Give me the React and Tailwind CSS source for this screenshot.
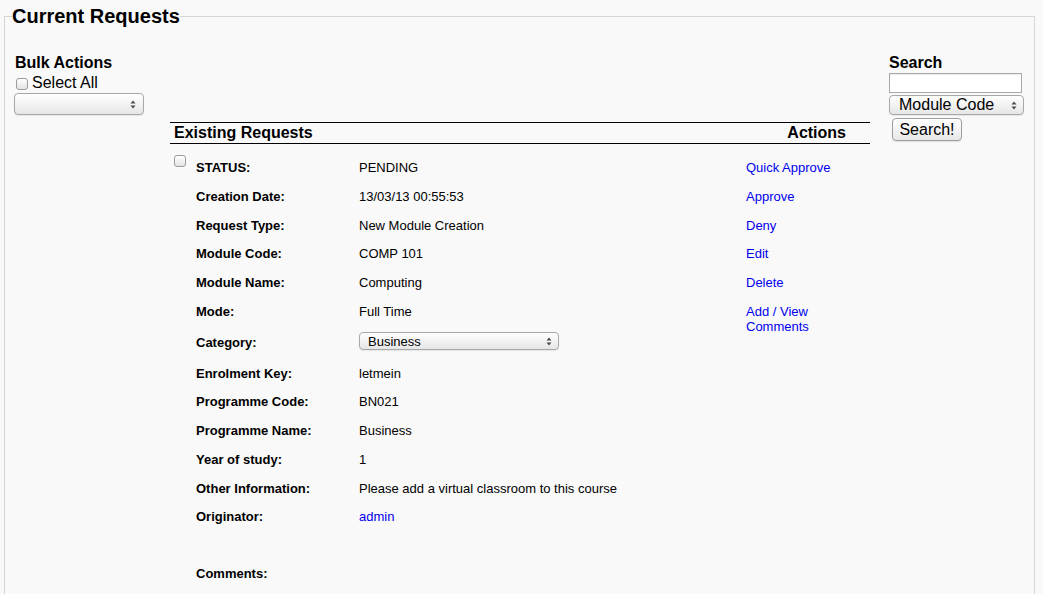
import React from 'react'

const rows = [
  { label: 'STATUS:', value: 'PENDING', action: 'Quick Approve' },
  { label: 'Creation Date:', value: '13/03/13 00:55:53', action: 'Approve' },
  { label: 'Request Type:', value: 'New Module Creation', action: 'Deny' },
  { label: 'Module Code:', value: 'COMP 101', action: 'Edit' },
  { label: 'Module Name:', value: 'Computing', action: 'Delete' },
  { label: 'Mode:', value: 'Full Time', action: 'Add / View Comments' },
]

const rowsAfter = [
  { label: 'Enrolment Key:', value: 'letmein' },
  { label: 'Programme Code:', value: 'BN021' },
  { label: 'Programme Name:', value: 'Business' },
  { label: 'Year of study:', value: '1' },
  { label: 'Other Information:', value: 'Please add a virtual classroom to this course' },
  { label: 'Originator:', value: 'admin', link: true },
]

function Check({ className = '' }) {
  return (
    <span className={`block w-[12px] h-[12px] rounded-[3px] border border-[#9c9c9c] bg-linear-to-b from-white to-[#e4e4e4] shadow-[0_1px_0_rgba(255,255,255,0.8)] ${className}`} />
  )
}

function Arrows() {
  return (
    <svg width="6" height="9" viewBox="0 0 6 9">
      <path d="M3 0.5L5.5 3.5H0.5Z M3 8.5L0.5 5.5H5.5Z" fill="#4a4a4a" />
    </svg>
  )
}

function FakeSelect({ text, className = '', textClass = '' }) {
  return (
    <div className={`flex items-center justify-between rounded-[4px] border border-[#a8a8a8] bg-linear-to-b from-white to-[#e6e6e6] shadow-[0_1px_1px_rgba(0,0,0,0.08)] ${className}`}>
      <span className={textClass}>{text}</span>
      <Arrows />
    </div>
  )
}

function Row({ label, value, action, link, height = 'h-[28.75px]' }) {
  return (
    <div className={`flex items-start ${height}`}>
      <div className="w-[26px] shrink-0" />
      <div className="w-[163px] shrink-0 pt-[7px] font-bold leading-[15px]">{label}</div>
      <div className={`w-[387px] shrink-0 pt-[7px] leading-[15px] ${link ? 'text-[#0000ee]' : ''}`}>{value}</div>
      {action && (
        <div className="w-[96px] pt-[7px] leading-[15px] text-[#0000ee]">{action}</div>
      )}
    </div>
  )
}

export default function App() {
  return (
    <div className="h-[594px] overflow-hidden bg-[#f9f9f9] font-['Liberation_Sans',Arial,sans-serif] text-black">
      <fieldset className="ml-[4px] mt-[5px] w-[1031px] border border-[#d6d6d6] px-[7px] pb-[60px]">
        <legend className="text-[20px] font-bold leading-[23px]">Current Requests</legend>

        <div className="flex items-start">
          {/* Bulk actions */}
          <div className="ml-[2px] mt-[26px] w-[131px] shrink-0">
            <div className="pl-[1px] text-[16px] font-bold leading-[18px]">Bulk Actions</div>
            <div className="flex items-start h-[18px]">
              <Check className="ml-[2px] mt-[6px]" />
              <span className="ml-[4px] mt-[2px] text-[16px] leading-[18px]">Select All</span>
            </div>
            <FakeSelect text="" className="mt-[3px] h-[22px] w-[130px] pr-[7px]" />
          </div>

          {/* Existing requests table */}
          <div className="ml-[25px] mt-[94px] w-[700px] shrink-0 text-[13px]">
            <div className="flex h-[22px] items-center justify-between border-y border-black pl-[4px] pr-[24px] text-[16px] font-bold leading-[20px]">
              <span>Existing Requests</span>
              <span>Actions</span>
            </div>
            <div className="relative pt-[9px]">
              <Check className="absolute left-[4px] top-[11px]" />
              {rows.map((r) => (
                <Row key={r.label} {...r} />
              ))}
              <div className="flex h-[33px] items-center">
                <div className="w-[26px] shrink-0" />
                <div className="w-[163px] shrink-0 font-bold leading-[15px]">Category:</div>
                <FakeSelect
                  text="Business"
                  className="-mt-[2px] h-[18px] w-[200px] pl-[8px] pr-[6px]"
                  textClass="text-[13px] leading-[15px]"
                />
              </div>
              {rowsAfter.map((r) => (
                <Row key={r.label} {...r} />
              ))}
              <div className="h-[27.75px]" />
              <Row label="Comments:" value="" />
            </div>
          </div>

          {/* Search */}
          <div className="ml-[19px] mt-[26px] w-[135px] shrink-0">
            <div className="text-[16px] font-bold leading-[18px]">Search</div>
            <div className="mt-[1px] h-[20px] w-[133px] border border-[#a9a9a9] bg-white shadow-[inset_0_1px_1px_rgba(0,0,0,0.08)]" />
            <FakeSelect
              text="Module Code"
              className="mt-[2px] h-[20px] w-[135px] pl-[9px] pr-[6px]"
              textClass="text-[16px] leading-[18px]"
            />
            <button className="ml-[3px] mt-[3px] h-[23px] w-[70px] rounded-[4px] border border-[#9d9d9d] bg-linear-to-b from-white to-[#e8e8e8] text-[16px] leading-[18px] shadow-[0_1px_1px_rgba(0,0,0,0.1)]">
              Search!
            </button>
          </div>
        </div>
      </fieldset>
    </div>
  )
}
